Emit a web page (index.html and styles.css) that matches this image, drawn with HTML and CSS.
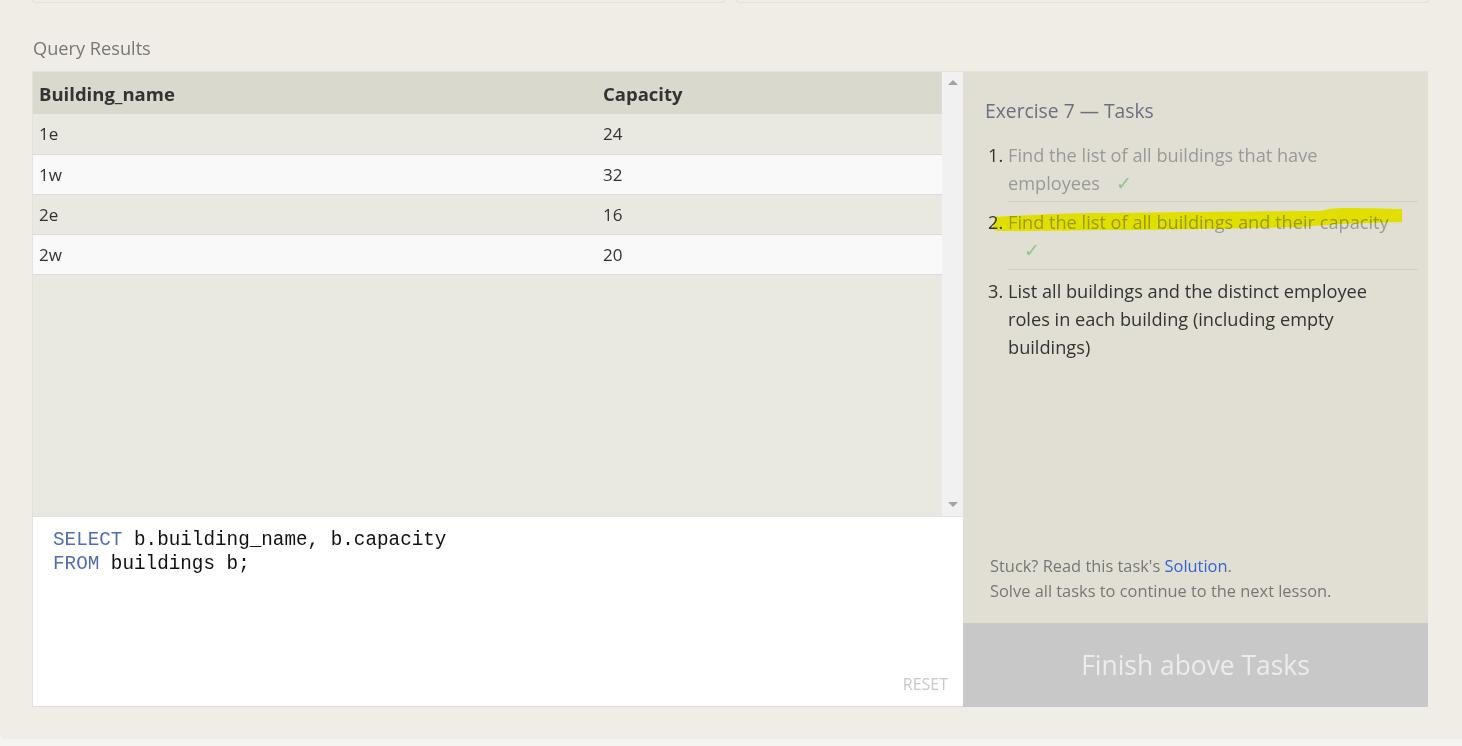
FILE: index.html
```html
<!DOCTYPE html>
<html>
<head>
<meta charset="utf-8">
<link rel="stylesheet" href="styles.css">
</head>
<body>
<div class="card">
  <div class="top-row">
    <div class="stub"></div>
    <div class="stub"></div>
  </div>
  <h2 class="section-title">Query Results</h2>
  <div class="workspace">
    <div class="left">
      <div class="results">
        <div class="table-wrap">
          <table class="res">
            <thead>
              <tr><th class="c1">Building_name</th><th>Capacity</th></tr>
            </thead>
            <tbody>
              <tr><td class="c1">1e</td><td>24</td></tr>
              <tr><td class="c1">1w</td><td>32</td></tr>
              <tr><td class="c1">2e</td><td>16</td></tr>
              <tr><td class="c1">2w</td><td>20</td></tr>
            </tbody>
          </table>
        </div>
        <div class="scrollbar">
          <span class="arrow up"></span>
          <span class="arrow down"></span>
        </div>
      </div>
      <div class="editor">
        <pre class="code"><span class="kw">SELECT</span> b.building_name, b.capacity
<span class="kw">FROM</span> buildings b;</pre>
        <div class="reset">RESET</div>
      </div>
    </div>
    <div class="right">
      <div class="tasks">
        <h3 class="tasks-title">Exercise 7 — Tasks</h3>
        <ol class="task-list">
          <li class="done">Find the list of all buildings that have employees</li>
          <li class="done">Find the list of all buildings and their capacity</li>
          <li>List all buildings and the distinct employee roles in each building (including empty buildings)</li>
        </ol>
        <div class="hint">
          <div>Stuck? Read this task's <a class="link">Solution</a>.</div>
          <div>Solve all tasks to continue to the next lesson.</div>
        </div>
      </div>
      <div class="finish">Finish above Tasks</div>
      <svg class="marker" width="420" height="34" viewBox="0 0 420 34">
        <path d="M4 13 C40 11 80 9 109 9 C200 8 280 7 329 7 C334 6 337 5 339 5 C345 4 350 4 354 4 C380 4 400 5 411 5 L411 18 C390 19 365 19 349 20 C335 21 320 22 309 23 C260 24 230 25 209 25 C160 26 130 26 109 26 C60 27 30 27 9 27 C5 27 2 26 2 24 Z" fill="#ffff00"/>
      </svg>
    </div>
  </div>
</div>
</body>
</html>
```
FILE: styles.css
```css
* { box-sizing: border-box; }
html, body { margin: 0; padding: 0; }
body {
  background: #f5f4f0;
  font-family: "Open Sans", "Noto Sans", sans-serif;
  color: #333;
  width: 1462px;
  height: 746px;
  overflow: hidden;
}
.card {
  background: #efede6;
  height: 739px;
  padding: 0 33px 0 32px;
  border-bottom-left-radius: 6px;
}
.top-row {
  display: flex;
  gap: 11px;
  height: 3px;
}
.stub {
  flex: 1;
  border: 1px solid #e3e1d8;
  border-top: none;
  border-radius: 0 0 3px 3px;
  background: #efede6;
}
.section-title {
  margin: 0;
  padding-top: 34px;
  height: 68px;
  font-size: 18.2px;
  font-weight: 400;
  color: #777;
  padding-left: 1px;
  line-height: 22px;
}
.workspace {
  display: flex;
  border-top: 1px solid #e4e2da;
  height: 636px;
}
.left {
  width: 931px;
  display: flex;
  flex-direction: column;
}
.results {
  display: flex;
  height: 444px;
  background: #eae9e1;
  border-left: 1px solid #e4e2da;
}
.table-wrap { flex: 1; }
.res {
  width: 100%;
  border-collapse: collapse;
  font-size: 17px;
}
.res th {
  text-align: left;
  font-weight: 700;
  background: #dad9cd;
  color: #333;
  height: 42px;
  padding: 0 0 0 6px;
  font-size: 18.5px;
}
.res td {
  height: 40px;
  padding: 0 0 0 6px;
  border-bottom: 1px solid #dddcd6;
  color: #333;
}
.res th.c1, .res td.c1 { width: 564px; }
.res tbody tr:nth-child(odd) td { background: #eae9e1; }
.res tbody tr:nth-child(even) td { background: #f9f9f9; }
.scrollbar {
  width: 21px;
  background: #f1f1f1;
  display: flex;
  flex-direction: column;
  justify-content: space-between;
  align-items: center;
  padding: 8px 0 9px;
}
.arrow {
  width: 0;
  height: 0;
  border-left: 5px solid transparent;
  border-right: 5px solid transparent;
}
.arrow.up { border-bottom: 5px solid #a3a3a3; }
.arrow.down { border-top: 5px solid #a3a3a3; }
.editor {
  flex: 1;
  background: #fff;
  border-top: 1px solid #e4e2da;
  border-left: 1px solid #e4e2da;
  border-bottom: 1px solid #dedcd4;
  display: flex;
  flex-direction: column;
  justify-content: space-between;
  padding: 11px 0 11px 20px;
}
.code {
  margin: 0;
  font-family: "Liberation Mono", "DejaVu Sans Mono", monospace;
  font-size: 19.3px;
  line-height: 24px;
  color: #111;
}
.kw { color: #4f6db5; }
.reset {
  align-self: flex-end;
  font-size: 16px;
  color: #c8c8c8;
  margin-right: 15px;
}
.right {
  width: 465px;
  display: flex;
  flex-direction: column;
  position: relative;
}
.tasks {
  flex: 1;
  background: #e1dfd4;
  display: flex;
  flex-direction: column;
  padding: 26px 10px 20px 22px;
}
.tasks-title {
  margin: 0;
  font-size: 19.3px;
  font-weight: 400;
  color: #6b7080;
  line-height: 26px;
}
.task-list {
  margin: 17px 0 0;
  padding: 0 0 0 23px;
  font-size: 18.2px;
  line-height: 28px;
  color: #333;
  flex: 1;
}
.task-list li {
  padding: 6px 12px 5px 0;
  border-bottom: 1px solid #d3d1c6;
}
.task-list li:first-child { padding-top: 0; padding-bottom: 4px; }
.task-list li:last-child { border-bottom: none; padding-top: 7px; }
.task-list li.done { color: #999; }
.task-list li::marker { color: #333; }
.task-list li.done::after {
  content: "✓";
  display: inline-block;
  font-family: "DejaVu Sans", sans-serif;
  font-size: 19px;
  line-height: 20px;
  color: #86c98b;
  margin-left: 16px;
}
.hint {
  padding-left: 5px;
  font-size: 16.4px;
  line-height: 25px;
  color: #777;
}
.link { color: #2f63d6; }
.finish {
  height: 84px;
  background: #c8c8c8;
  color: #ececec;
  font-size: 26.4px;
  display: flex;
  align-items: center;
  justify-content: center;
}
.marker {
  position: absolute;
  left: 28px;
  top: 132px;
  mix-blend-mode: multiply;
  pointer-events: none;
}
```
